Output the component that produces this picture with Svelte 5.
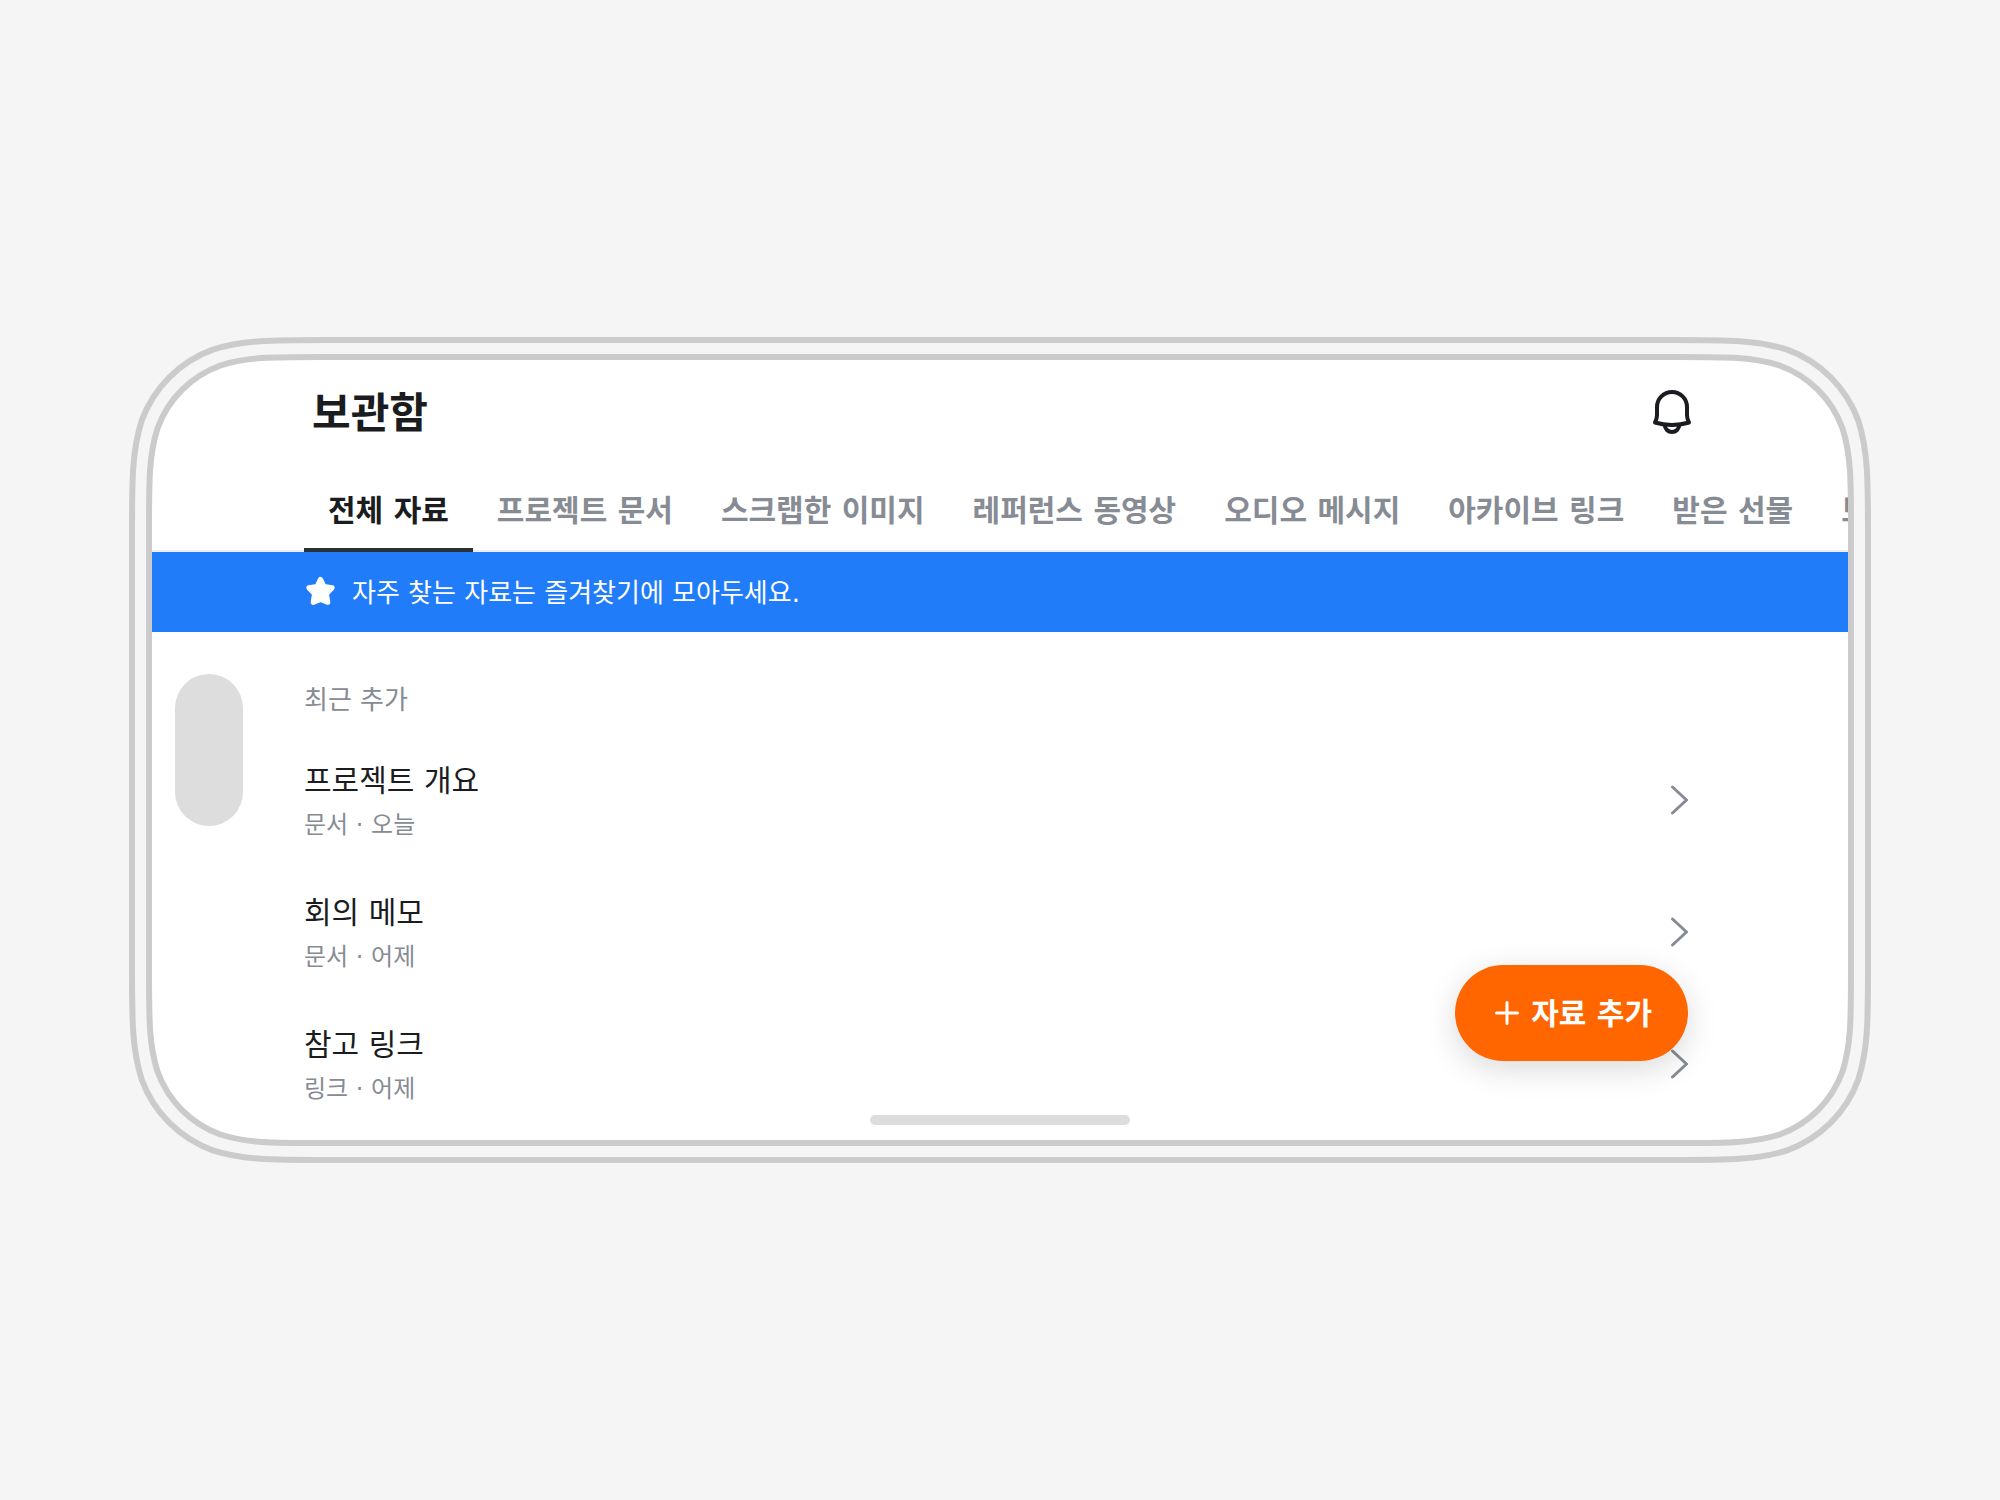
<script lang="ts">
	const tabs = [
		'전체 자료',
		'프로젝트 문서',
		'스크랩한 이미지',
		'레퍼런스 동영상',
		'오디오 메시지',
		'아카이브 링크',
		'받은 선물',
		'보낸 선물'
	];

	const items = [
		{ title: '프로젝트 개요', meta: '문서 · 오늘' },
		{ title: '회의 메모', meta: '문서 · 어제' },
		{ title: '참고 링크', meta: '링크 · 어제' }
	];

	let active = $state(0);
</script>

<main class="stage">
	<div class="device">
		<div class="screen">
			<header class="header">
				<h1>보관함</h1>
				<button class="bell" aria-label="알림">
					<svg viewBox="0 0 48 48" width="48" height="48" fill="none" stroke="#1a1c20" stroke-width="4" stroke-linejoin="round">
						<path d="M7 34.500C8.500 32 9 30 9 27V19a15 15 0 0 1 30 0v8c0 3 .5 5 2 7.500Q24 39.500 7 34.500Z" />
						<path d="M16.800 37a7.200 7 0 0 0 14.400 0" />
					</svg>
				</button>
			</header>

			<div class="tabs" role="tablist">
				{#each tabs as tab, i}
					<button
						class="tab"
						class:active={active === i}
						role="tab"
						aria-selected={active === i}
						onclick={() => (active = i)}
					>
						{tab}
					</button>
				{/each}
			</div>

			<div class="banner">
				<svg viewBox="0 0 32 32" width="32" height="32" fill="#fff" stroke="#fff" stroke-width="5" stroke-linejoin="round">
					<path d="M16.500 3.400l3.500 7 8.200 1.300-5.700 6.100 1.300 8.500-7.300-2.800-7.300 2.800 1.300-8.500L4.800 11.700l8.200-1.300z" />
				</svg>
				<span>자주 찾는 자료는 즐겨찾기에 모아두세요.</span>
			</div>

			<section class="recent">
				<h2>최근 추가</h2>
				<ul>
					{#each items as item}
						<li>
							<a class="row" href="#item">
								<span class="text">
									<span class="title">{item.title}</span>
									<span class="meta">{item.meta}</span>
								</span>
								<svg viewBox="0 0 18 30" width="18" height="30" fill="none" stroke="#868b94" stroke-width="3" stroke-linecap="round" stroke-linejoin="round">
									<path d="M2.500 2l14 13L2.500 28" />
								</svg>
							</a>
						</li>
					{/each}
				</ul>
			</section>

			<button class="fab">
				<svg viewBox="0 0 24 24" width="24" height="24" fill="none" stroke="#fff" stroke-width="3" stroke-linecap="round">
					<path d="M12 1.500v21M1.500 12h21" />
				</svg>
				<span>자료 추가</span>
			</button>
			<div class="island"></div>
			<div class="home-bar"></div>
		</div>
	</div>
</main>

<style>
	:global(body) {
		margin: 0;
		background: #f5f5f5;
		font-family: 'DejaVu Sans', 'Noto Sans CJK KR', sans-serif;
		color: #1a1c20;
	}

	button {
		padding: 0;
		border: 0;
		background: none;
		font: inherit;
		color: inherit;
		cursor: pointer;
	}

	.stage {
		box-sizing: border-box;
		min-height: 100vh;
		padding: 0 129px;
		display: flex;
		align-items: center;
	}

	/* double outline with continuous corners, sliced so the sides stretch */
	.device {
		flex: 1;
		min-width: 0;
		border: 23px solid transparent;
		border-image-source: url("data:image/svg+xml,%3Csvg xmlns='http://www.w3.org/2000/svg' width='420' height='420' fill='%23f5f5f5' stroke='%23cbcbcb' stroke-width='6'%3E%3Cpath d='M198.7 3H221.3C277.7 3 305.8 3 336.2 12.6C369.3 24.6 395.4 50.7 407.4 83.8C417 114.2 417 142.3 417 198.7V221.3C417 277.7 417 305.8 407.4 336.2C395.4 369.3 369.3 395.4 336.2 407.4C305.8 417 277.7 417 221.3 417H198.7C142.3 417 114.2 417 83.8 407.4C50.7 395.4 24.6 369.3 12.6 336.2C3 305.8 3 277.7 3 221.3V198.7C3 142.3 3 114.2 12.6 83.8C24.6 50.7 50.7 24.6 83.8 12.6C114.2 3 142.3 3 198.7 3Z'/%3E%3Cpath fill='%23fff' d='M192.7 20H227.3C277 20 301.9 20 328.6 28.5C357.9 39.1 380.9 62.1 391.5 91.4C400 118.1 400 143 400 192.7V227.3C400 277 400 301.9 391.5 328.6C380.9 357.9 357.9 380.9 328.6 391.5C301.9 400 277 400 227.3 400H192.7C143 400 118.1 400 91.4 391.5C62.1 380.9 39.1 357.9 28.5 328.6C20 301.9 20 277 20 227.3V192.7C20 143 20 118.1 28.5 91.4C39.1 62.1 62.1 39.1 91.4 28.5C118.1 20 143 20 192.7 20Z'/%3E%3C/svg%3E");
		border-image-slice: 200 fill;
		border-image-width: 200px;
	}

	.screen {
		position: relative;
		overflow: hidden;
		padding-bottom: 10px;
	}

	.header {
		display: flex;
		align-items: center;
		justify-content: space-between;
		height: 104px;
		padding: 0 152px 0 160px;
	}

	h1 {
		margin: 0;
		padding-top: 4px;
		font-size: 42px;
		line-height: 56px;
		font-weight: 700;
	}

	.bell {
		display: flex;
	}

	.tabs {
		display: flex;
		padding-left: 152px;
		box-shadow: inset 0 -2px #eee;
	}

	.tab {
		flex: none;
		height: 88px;
		padding: 10px 24px 0;
		border-bottom: 4px solid transparent;
		font-size: 30px;
		line-height: 40px;
		font-weight: 700;
		color: #868b94;
		white-space: nowrap;
	}

	.tab.active {
		border-color: #2a3038;
		color: #1a1c20;
	}

	.banner {
		display: flex;
		align-items: center;
		gap: 16px;
		height: 80px;
		padding: 0 152px;
		background: #217cf9;
		color: #fff;
		font-size: 26px;
		line-height: 36px;
	}

	.banner span {
		padding-top: 2px;
	}

	.recent {
		padding: 50px 160px 0 152px;
	}

	h2 {
		margin: 0 0 16px;
		font-size: 26px;
		line-height: 36px;
		font-weight: 400;
		color: #868b94;
	}

	ul {
		margin: 0;
		padding: 0;
		list-style: none;
	}

	.row {
		display: flex;
		align-items: center;
		justify-content: space-between;
		height: 132px;
		color: inherit;
		text-decoration: none;
	}

	.text {
		display: flex;
		flex-direction: column;
		gap: 4px;
		padding-top: 2px;
	}

	.title {
		font-size: 30px;
		line-height: 44px;
	}

	.meta {
		font-size: 24px;
		line-height: 36px;
		color: #868b94;
	}

	.fab {
		position: absolute;
		right: 160px;
		bottom: 79px;
		display: flex;
		align-items: center;
		gap: 12px;
		height: 96px;
		padding: 0 36px 0 40px;
		border-radius: 48px;
		background: #f60;
		box-shadow: 0 8px 32px rgba(0, 0, 0, 0.15);
		color: #fff;
		font-size: 30px;
		line-height: 40px;
		font-weight: 700;
	}

	.fab span {
		padding-top: 2px;
	}

	.island {
		position: absolute;
		left: 23px;
		top: 314px;
		width: 68px;
		height: 152px;
		border-radius: 34px;
		background: #ddd;
	}

	.home-bar {
		position: absolute;
		left: 50%;
		bottom: 15px;
		width: 260px;
		height: 10px;
		border-radius: 5px;
		background: #ddd;
		transform: translateX(-50%);
	}
</style>
